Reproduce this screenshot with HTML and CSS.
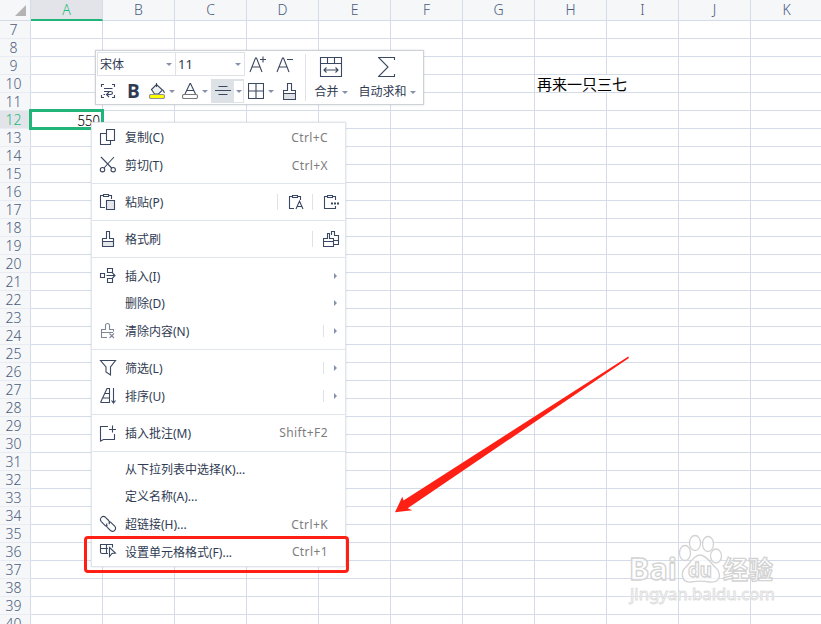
FILE: index.html
```html
<!DOCTYPE html>
<html lang="zh-CN">
<head>
    <meta charset="UTF-8">
    <title>工作表</title>
    <link rel="stylesheet" href="styles.css">
</head>
<body>
<div class="sheet">
    <div class="corner"><svg width="11" height="11"><path d="M11 0V11H0Z" fill="#b4b4b4"/></svg></div>
    <div class="cols">
        <span class="active">A</span><span>B</span><span>C</span><span>D</span><span>E</span><span>F</span><span>G</span><span>H</span><span>I</span><span>J</span><span>K</span>
    </div>
    <div class="rows">
        <span>7</span><span>8</span><span>9</span><span>10</span><span>11</span><span class="active">12</span><span>13</span><span>14</span><span>15</span><span>16</span><span>17</span><span>18</span><span>19</span><span>20</span><span>21</span><span>22</span><span>23</span><span>24</span><span>25</span><span>26</span><span>27</span><span>28</span><span>29</span><span>30</span><span>31</span><span>32</span><span>33</span><span>34</span><span>35</span><span>36</span><span>37</span><span>38</span><span>39</span><span>40</span>
    </div>
    <div class="cells">
        <div class="cell selected">550</div>
        <div class="cell note">再来一只三七</div>
    </div>
</div>

<!-- watermark -->
<svg class="watermark" width="160" height="80">
    <g class="wm-shape">
        <text x="4" y="47" font-size="30" textLength="48" lengthAdjust="spacingAndGlyphs">Bai</text>
        <ellipse cx="60" cy="20" rx="5.5" ry="7.5"/>
        <ellipse cx="70" cy="10" rx="5.5" ry="7.5"/>
        <ellipse cx="83" cy="11" rx="5.5" ry="7.5"/>
        <ellipse cx="91" cy="23" rx="5.5" ry="7"/>
        <path d="M75 22C69 22 66 29 61 34C56 38 55 50 66 49C72 48 79 48 85 49C97 50 96 39 90 34C85 29 81 22 75 22Z"/>
        <text x="63" y="44" font-size="19" textLength="24" lengthAdjust="spacingAndGlyphs">du</text>
        <text x="98" y="46" font-size="25" class="wm-cn" textLength="50">经验</text>
    </g>
    <text class="wm-url" x="5" y="67" font-size="16" textLength="145" lengthAdjust="spacingAndGlyphs">jingyan.baidu.com</text>
</svg>

<!-- mini toolbar -->
<div class="toolbar">
    <div class="tools">
        <div class="line">
            <div class="select font"><span>宋体</span><i class="down"></i></div>
            <div class="select size"><span>11</span><i class="down"></i></div>
            <svg class="grow" width="17" height="18"><path d="M1 16L6.5 2H7.5L13 16M3 11H11M11 3.5H17M14 .5V6.5"/></svg>
            <svg class="shrink" width="17" height="18"><path d="M1 16L6.5 2H7.5L13 16M3 11H11M11 3.5H17"/></svg>
        </div>
        <div class="line second">
            <svg class="wrap" width="16" height="16"><path d="M4 1.5H1.5V4M12 1.5H14.5V4M1.5 12V14.5H4M14.5 12V14.5H12M4 5.5H12.5M4 8.5H10.5Q12.5 8.5 12.5 10T10.5 11.5H7M9 9L6.5 11.5L9 14M3.5 11.5H5"/></svg>
            <b class="bold">B</b>
            <svg class="fill" width="17" height="16"><path d="M2.5 6.5L7.5 1.5L13.5 7L9.5 11H5.5Z" fill="#f0f1f3"/><path d="M7.5 0V4M14 7L15.5 10"/><rect x=".5" y="11.5" width="15" height="4" rx="1.5" fill="#ffff00" stroke="#8c9099"/></svg>
            <i class="down"></i>
            <svg class="color" width="17" height="16"><path d="M3 11L8 .5H8.5L13.5 11M5 7.5H11.5"/><rect x=".5" y="11.5" width="15" height="4" rx="1.5" fill="#fff" stroke="#777"/></svg>
            <i class="down"></i>
            <div class="align">
                <svg width="16" height="12"><path d="M3.5 1.5H12.5M0 5.5H16M3.5 9.5H12.5"/></svg>
                <span><i class="down"></i></span>
            </div>
            <svg class="border" width="16" height="16"><path d="M.5 .5H15.5V15.5H.5ZM8 .5V15.5M.5 8H15.5"/></svg>
            <i class="down"></i>
            <svg class="brush" width="13" height="17"><path d="M.5 10.5H12.5V16.5H.5Z" fill="#dfe1e6"/><path d="M.5 10.5V7.5H4.5V.5H8.5V7.5H12.5V10.5"/></svg>
        </div>
    </div>
    <div class="big">
        <svg width="24" height="21"><path d="M1.5 .5H22.5V19.5H1.5ZM1.5 6.5H22.5M8.5 .5V6.5M15.5 .5V6.5M5 13H19M7.5 10.5L5 13L7.5 15.5M16.5 10.5L19 13L16.5 15.5"/></svg>
        <div>合并<i class="down"></i></div>
    </div>
    <div class="big sum">
        <svg width="18" height="21"><path d="M16.5 3V.5H.5L10 10L.5 19.5H16.5V17"/></svg>
        <div>自动求和<i class="down"></i></div>
    </div>
</div>

<!-- context menu -->
<div class="menu">
    <div class="group first">
        <div class="item">
            <svg width="18" height="18"><path d="M7.5 1.5H15.5V12.5H7.5ZM7.5 5.5H1.5V16.5H11.5V12.5"/></svg>
            <span>复制(C)</span><em>Ctrl+C</em>
        </div>
        <div class="item">
            <svg width="18" height="18"><path d="M2 1L12.7 12M15 1L5 12"/><circle cx="3.5" cy="13.7" r="2.2"/><circle cx="14.2" cy="13.7" r="2.2"/></svg>
            <span>剪切(T)</span><em>Ctrl+X</em>
        </div>
    </div>
    <div class="group">
        <div class="item">
            <svg width="18" height="18"><path d="M6 14.5H1.5V2.5H4.5M9.5 2.5H12.5V6M4.5 1.5H9.5V3.5H4.5Z"/><path d="M7.5 7.5H15.5V16.5H7.5Z" fill="#e4e6ea"/></svg>
            <span>粘贴(P)</span>
            <div class="extra"><svg width="16" height="18"><path d="M6 15.5H1.5V3.5H4M9.5 3.5H12.5V7M4.5 2.5H9.5V4.5H4.5ZM8 16L11.5 8L15 16M9.5 13.5H13.5"/></svg></div>
            <div class="extra last"><svg width="16" height="18"><path d="M12.5 13V15.5H1.5V3.5H4M9.5 3.5H12.5V7M4.5 2.5H9.5V4.5H4.5Z"/><path d="M8 10.5H10M11 10.5H13M14 10.5H16" stroke-width="2"/></svg></div>
        </div>
    </div>
    <div class="group">
        <div class="item">
            <svg width="18" height="18"><path d="M3.5 11.5H14.5V16.5H3.5Z" fill="#e4e6ea"/><path d="M3.5 11.5V8.5H7.5V1.5H10.5V8.5H14.5V11.5"/></svg>
            <span>格式刷</span>
            <div class="extra last"><svg width="18" height="18"><path d="M8.5 5V1.5H11.5V5.5H15.5V14.5H11M11 10.5H15.5M.5 16.5V8.5H4.5V3.5H6.5V8.5H10.5V16.5ZM.5 11.5H10.5"/></svg></div>
        </div>
    </div>
    <div class="group three">
        <div class="item">
            <svg width="18" height="18"><path d="M1.5 6.5H5.5V10.5H1.5ZM8.5 1.5H13.5V5.5H8.5ZM8.5 11.5H13.5V15.5H8.5ZM7.5 8.5H16M13.5 6L16 8.5L13.5 11"/></svg>
            <span>插入(I)</span><i class="right"></i>
        </div>
        <div class="item">
            <svg width="18" height="18"></svg>
            <span>删除(D)</span><i class="right"></i>
        </div>
        <div class="item">
            <svg class="dim" width="18" height="18"><path d="M8 15.5H2.5V7.5H6.5V3.5Q6.5 1.5 8.5 1.5T10.5 3.5V7.5H14.5V9.5M2.5 10.5H14M10.5 11.5L15 16M15 11.5L10.5 16"/></svg>
            <span>清除内容(N)</span><i class="right bar"></i>
        </div>
    </div>
    <div class="group">
        <div class="item">
            <svg width="18" height="18"><path d="M1.5 1.5H16.5L11.5 8V16L7 13V8Z"/></svg>
            <span>筛选(L)</span><i class="right bar"></i>
        </div>
        <div class="item">
            <svg width="18" height="18"><path d="M1.5 15.5L8 1.5H10.5V15.5H8M1.5 15.5H10.5M6 6.5H10.5M3.5 11H10.5M14.5 1V16M12.5 13.5L14.5 16L16.5 13.5"/></svg>
            <span>排序(U)</span><i class="right bar"></i>
        </div>
    </div>
    <div class="group">
        <div class="item">
            <svg width="18" height="18"><path d="M9 2.5H1.5V17L4.5 15.5H15.5V10M13.5 1.5V8.5M10 5.5H17"/></svg>
            <span>插入批注(M)</span><em>Shift+F2</em>
        </div>
    </div>
    <div class="group last-group">
        <div class="item">
            <svg width="18" height="18"></svg>
            <span>从下拉列表中选择(K)...</span>
        </div>
        <div class="item">
            <svg width="18" height="18"></svg>
            <span>定义名称(A)...</span>
        </div>
        <div class="item">
            <svg width="18" height="18"><path d="M8.5 10.5L6.5 10.8L2.3 6.6Q.5 4.5 2.3 2.5T6.5 2.3L9.7 5.5Q11 7 10 9.2M9.5 7.3L11.5 7L15.7 11.2Q17.5 13.3 15.7 15.3T11.5 15.5L8.3 12.3Q7 10.8 8 8.6"/></svg>
            <span>超链接(H)...</span><em>Ctrl+K</em>
        </div>
        <div class="item">
            <svg width="18" height="18"><path d="M9 10.5H3Q1.5 10.5 1.5 9V1.5H13.5V4.5M1.5 5.5H9M7.5 1.5V10.5"/><path d="M10.5 4.5L16.5 10L13 10.5L10.5 13.5Z" fill="#fff"/></svg>
            <span>设置单元格格式(F)...</span><em>Ctrl+1</em>
        </div>
    </div>
</div>

<div class="redbox"></div>
<svg class="arrow" width="240" height="162"><path d="M238.3 1.5L239 3L17.7 153.3L22.3 155.3L5 157.3L12.3 141.7L13.5 145.5Z" fill="#ff2015"/></svg>
</body>
</html>
```

FILE: styles.css
```css
*{
    padding: 0;
    margin: 0;
    box-sizing: border-box;
}
body{
    width: 821px;
    height: 624px;
    overflow: hidden;
    position: relative;
    background: #fff;
    font-family: "Noto Sans", "Noto Sans CJK SC", sans-serif;
    font-size: 12px;
    color: #2f3b52;
}
i,em{
    font-style: normal;
}
svg{
    display: block;
    flex: none;
    fill: none;
    stroke: #3b4861;
    stroke-width: 1.1;
}

/* sheet */
.sheet{
    display: grid;
    grid-template-columns: 31px 792px;
    grid-template-rows: 21px 612px;
    width: 823px;
}
.corner{
    background: #f5f7f9;
    border-right: 1px solid #d4dcea;
    border-bottom: 1px solid #d4dcea;
    padding: 5px 0 0 15px;
}
.corner svg{
    stroke: none;
}
.cols{
    display: flex;
    background: #f5f7f9;
}
.cols span{
    width: 72px;
    height: 21px;
    line-height: 19px;
    text-align: center;
    font-size: 14px;
    font-weight: 300;
    color: #4b5c7d;
    border-right: 1px solid #d4dcea;
    border-bottom: 1px solid #d4dcea;
}
.cols .active{
    background: #e2e4e9;
    color: #1fbb7d;
    border-bottom: 2px solid #21b57a;
}
.rows span{
    display: block;
    height: 18px;
    line-height: 18px;
    padding-right: 3px;
    text-align: center;
    font-size: 14px;
    font-weight: 300;
    color: #4b5c7d;
    background: #f5f7f9;
    border-right: 1px solid #d4dcea;
    border-bottom: 1px solid #e9edf3;
}
.rows .active{
    background: #e2e4e9;
    color: #1fbb7d;
}
.cells{
    display: grid;
    grid-template-columns: repeat(11, 72px);
    grid-template-rows: repeat(34, 18px);
    background-image: linear-gradient(to left, #d4dcea 1px, transparent 1px), linear-gradient(to top, #d4dcea 1px, transparent 1px);
    background-size: 72px 18px;
}
.cell{
    font-family: "Noto Sans CJK SC", sans-serif;
    color: #000;
    white-space: nowrap;
}
.selected{
    grid-column: 1;
    grid-row: 6;
    margin: -2px -1px -1px -2px;
    border: 3px solid #21b57a;
    background: #fff;
    font-size: 14px;
    font-weight: 300;
    line-height: 17px;
    text-align: right;
    padding-right: 1px;
}
.note{
    grid-column: 8 / 10;
    grid-row: 4;
    margin: 0 1px 1px 0;
    padding-left: 2px;
    background: linear-gradient(#fff, #fff) no-repeat;
    background-size: 100px 17px;
    font-size: 15px;
    line-height: 17px;
}

/* toolbar */
.toolbar{
    position: absolute;
    left: 95px;
    top: 50px;
    width: 329px;
    height: 55px;
    display: flex;
    background: #fff;
    border: 1px solid #cdd1d8;
    box-shadow: 0 0 2px rgba(0,0,0,.15);
}
.tools{
    width: 210px;
    margin: 3px 0;
    border-right: 1px solid #dfe2e8;
}
.line{
    display: flex;
    align-items: center;
    height: 22px;
}
.second{
    margin-top: 4px;
    padding-left: 4px;
}
.down{
    display: inline-block;
    flex: none;
    border: 3px solid transparent;
    border-top: 3px solid #8591aa;
    border-bottom: 0;
}
.select{
    display: flex;
    align-items: center;
    justify-content: space-between;
    height: 24px;
    margin-top: -2px;
    border: 1px solid #dfe2e8;
    padding: 0 3px 0 2px;
}
.font{
    width: 79px;
    margin-left: 1px;
}
.size{
    width: 70px;
    margin-left: -1px;
}
.size span{
    font-size: 13px;
}
.grow{
    margin-left: 4px;
}
.shrink{
    margin-left: 10px;
}
.bold{
    width: 13px;
    margin-left: 11px;
    font-size: 19px;
    line-height: 22px;
    font-family: "Open Sans", sans-serif;
}
.fill{
    margin: 0 3px 0 9px;
}
.color{
    margin: 0 3px 0 7px;
}
.align{
    display: flex;
    align-items: center;
    justify-content: space-between;
    width: 33px;
    height: 24px;
    margin-left: 3px;
    padding: 1px 1px 1px 4px;
    background: #dde2e7;
}
.align span{
    display: flex;
    align-items: center;
    justify-content: center;
    width: 9px;
    height: 21px;
    background: #fff;
}
.border{
    margin: 0 4px 0 4px;
}
.brush{
    margin-left: 9px;
}
.big{
    display: flex;
    flex-direction: column;
    align-items: center;
    width: 50px;
    padding-top: 6px;
}
.big div{
    display: flex;
    align-items: center;
    gap: 3px;
    margin-top: 5px;
    line-height: 18px;
}
.sum{
    width: 62px;
}

/* menu */
.menu{
    position: absolute;
    left: 91px;
    top: 122px;
    width: 255px;
    height: 445px;
    background: #fff;
    border: 1px solid #e0e4eb;
    box-shadow: 0 0 2px rgba(120,135,165,.3);
}
.group{
    padding: 4px 0;
    border-bottom: 1px solid #e0e4eb;
}
.first{
    padding-top: 0;
}
.last-group{
    padding-top: 3px;
    border-bottom: none;
}
.item{
    display: flex;
    align-items: center;
    height: 28px;
    padding-left: 7px;
}
.three .item,
.last-group .item{
    height: 27.67px;
}
.item span{
    flex: 1;
    margin-left: 8px;
    white-space: nowrap;
}
.item em{
    margin-right: 17px;
    letter-spacing: .4px;
    color: #7d7d80;
}
.dim{
    stroke: #7f8797;
}
.extra{
    width: 35px;
    height: 16px;
    padding-left: 10px;
    border-left: 1px solid #dfe2e8;
}
.extra svg{
    margin-top: -1px;
}
.extra.last{
    width: 33px;
}
.right{
    display: flex;
    align-items: center;
    height: 12px;
    padding-right: 8px;
}
.right:after{
    content: "";
    border: 3px solid transparent;
    border-left: 3px solid #8591aa;
    border-right: 0;
}
.bar{
    padding-left: 10px;
    border-left: 1px solid #dfe2e8;
}

/* marks drawn over the sheet */
.redbox{
    position: absolute;
    left: 84px;
    top: 536px;
    width: 265px;
    height: 37px;
    border: 3px solid #ff2015;
    border-radius: 4px;
}
.arrow{
    position: absolute;
    left: 390px;
    top: 355px;
    stroke: none;
}
.watermark{
    position: absolute;
    left: 625px;
    top: 533px;
    font-family: "Noto Sans", sans-serif;
    font-weight: bold;
}
.wm-shape{
    fill: #fff;
    fill-opacity: .7;
    stroke: #d3d3d3;
    stroke-width: 1.3;
}
.wm-cn{
    font-family: "Noto Sans CJK SC", sans-serif;
}
.wm-url{
    fill: #fff;
    stroke: #dedede;
    stroke-width: .9;
    font-weight: normal;
}
```
